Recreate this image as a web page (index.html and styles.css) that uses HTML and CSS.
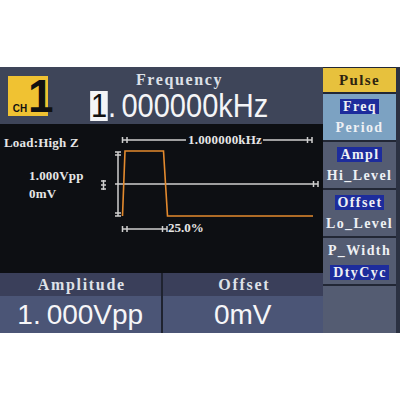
FILE: index.html
```html
<!DOCTYPE html>
<html lang="en">
  <head>
    <meta charset="UTF-8" />
    <meta name="viewport" content="width=device-width, initial-scale=1.0" />
    <title>Pulse Generator</title>
    <link rel="stylesheet" href="styles.css">
  </head>
  <body>
    <div class="screen">
      <div class="main">
        <header class="freq-bar">
          <div class="ch-badge">
            <span class="ch">CH</span>
            <span class="num">1</span>
          </div>
          <div class="freq">
            <div class="freq-title">Frequency</div>
            <div class="freq-value"><span class="cursor">1</span><span class="dot">.</span>000000kHz</div>
          </div>
        </header>

        <div class="graph">
          <svg class="wave" width="323" height="149" viewBox="0 0 323 149">
            <g class="labels">
              <text x="4" y="23">Load:High Z</text>
              <text x="29" y="56">1.000Vpp</text>
              <text x="29" y="74">0mV</text>
              <text x="188" y="20">1.000000kHz</text>
              <text class="duty" x="168" y="108">25.0%</text>
            </g>
            <g class="guides">
              <!-- period -->
              <path d="M127,16 H186 M263,16 H307" />
              <path d="M122.5,13 v6 M122.5,16 h4.5 M127,13 v6" />
              <path d="M307.5,13 v6 M307.5,16 h4.5 M312,13 v6" />
              <!-- offset level -->
              <path d="M115,60 H313" />
              <path d="M313.5,57 v6 M313.5,60 h4.5 M318,57 v6" />
              <!-- amplitude -->
              <path d="M118,28 V92" />
              <path d="M115,28 h6 M115,31 h6 M115,89 h6 M115,92 h6" />
              <path d="M103.5,56 v10 M101,57 h5 M101,61 h5 M101,65 h5" />
              <!-- duty -->
              <path d="M127,105 H162" />
              <path d="M122.5,102 v6 M122.5,105 h4.5 M127,102 v6" />
              <path d="M162.5,102 v6 M162.5,105 h4.5 M167,102 v6" />
            </g>
            <path class="pulse" d="M122.5,92 L125,27 H163.5 L167.5,92 H313" />
          </svg>
        </div>

        <div class="params">
          <div class="param">
            <div class="param-label">Amplitude</div>
            <div class="param-value">1<span class="dot">.</span>000Vpp</div>
          </div>
          <div class="param">
            <div class="param-label">Offset</div>
            <div class="param-value">0mV</div>
          </div>
        </div>
      </div>

      <nav class="menu">
        <div class="menu-title">Pulse</div>
        <div class="menu-item active">
          <span class="sel">Freq</span>
          <span>Period</span>
        </div>
        <div class="menu-item">
          <span class="sel">Ampl</span>
          <span>Hi_Level</span>
        </div>
        <div class="menu-item">
          <span class="sel">Offset</span>
          <span>Lo_Level</span>
        </div>
        <div class="menu-item">
          <span>P_Width</span>
          <span class="sel">DtyCyc</span>
        </div>
        <div class="menu-item"></div>
      </nav>
    </div>
  </body>
</html>
```

FILE: styles.css
```css
body {
  margin: 0;
  background-color: #fff;
  font-family: "Liberation Serif", serif;
}

.screen {
  display: flex;
  width: 400px;
  height: 266px;
  margin-top: 67px;
  background-color: #2b3142;
}

.main {
  display: flex;
  flex-direction: column;
  width: 323px;
}

/* top bar */
.freq-bar {
  display: flex;
  height: 57px;
  padding: 9px 0 0 8px;
  box-sizing: border-box;
  background-color: #3e4559;
}

.ch-badge {
  display: flex;
  align-items: baseline;
  width: 40px;
  height: 40px;
  padding-left: 4px;
  box-sizing: border-box;
  background-color: #f0c232;
  color: #111;
  font-family: "Liberation Sans", Arial, sans-serif;
  font-weight: bold;
}

.ch-badge .ch {
  font-size: 11px;
  line-height: 38px;
  transform: scaleX(0.9);
}

.ch-badge .num {
  font-size: 46px;
  line-height: 40px;
  margin-left: 0;
}

.freq {
  flex: 1;
  padding-right: 12px;
  text-align: center;
}

.freq-title {
  margin-top: -3px;
  color: #dde1e8;
  font-size: 16px;
  font-weight: bold;
  line-height: 14px;
  letter-spacing: 1.6px;
}

.freq-value {
  display: inline-block;
  margin-top: 4px;
  color: #f4f5f7;
  font-family: "Liberation Sans", Arial, sans-serif;
  font-size: 33px;
  line-height: 30px;
  transform: scaleX(0.88);
  transform-origin: center;
}

.cursor {
  display: inline-block;
  padding: 0 1px;
  background-color: #f4f5f7;
  color: #111;
}

.dot {
  margin-right: 6px;
}

/* waveform area */
.graph {
  height: 149px;
  background-color: #0d0f13;
}

.wave {
  display: block;
}

.labels text {
  fill: #e6e6e6;
  font-family: "Liberation Serif", serif;
  font-size: 13px;
  font-weight: bold;
  letter-spacing: 0.2px;
}

.labels .duty {
  font-size: 13px;
  letter-spacing: 0;
}

.guides path {
  fill: none;
  stroke: #cfcfcf;
  stroke-width: 1.5;
}

.pulse {
  fill: none;
  stroke: #e38a2e;
  stroke-width: 1.6;
}

/* bottom parameters */
.params {
  display: flex;
  gap: 2px;
  height: 60px;
  background-color: #1f2330;
}

.param {
  display: flex;
  flex: 1;
  flex-direction: column;
}

.param-label {
  height: 23px;
  padding-left: 3px;
  background-color: #3a3f5a;
  color: #dfe2e8;
  font-size: 16px;
  font-weight: bold;
  line-height: 23px;
  letter-spacing: 1.7px;
  text-align: center;
}

.param-value {
  flex: 1;
  background-color: #4b5576;
  color: #f6f6f8;
  font-family: "Liberation Sans", Arial, sans-serif;
  font-size: 28px;
  line-height: 37px;
  text-align: center;
}

/* soft key menu */
.menu {
  display: flex;
  flex-direction: column;
  gap: 2px;
  width: 73px;
  padding-top: 1px;
  background-color: #222735;
  font-size: 14px;
  font-weight: bold;
  letter-spacing: 1.4px;
}

.menu-title {
  height: 24px;
  background-color: #e7c13d;
  color: #2e2410;
  font-size: 15px;
  line-height: 24px;
  text-align: center;
}

.menu-item {
  display: flex;
  flex-direction: column;
  align-items: center;
  justify-content: center;
  gap: 6px;
  height: 46px;
  background-color: #545c72;
  color: #eef0f4;
}

.menu-item:last-child {
  flex: 1;
}

.menu-item.active {
  background-color: #7ca2c2;
}

.sel {
  padding: 0 2px 0 3px;
  background-color: #1d2c9c;
  line-height: 15px;
}
```
